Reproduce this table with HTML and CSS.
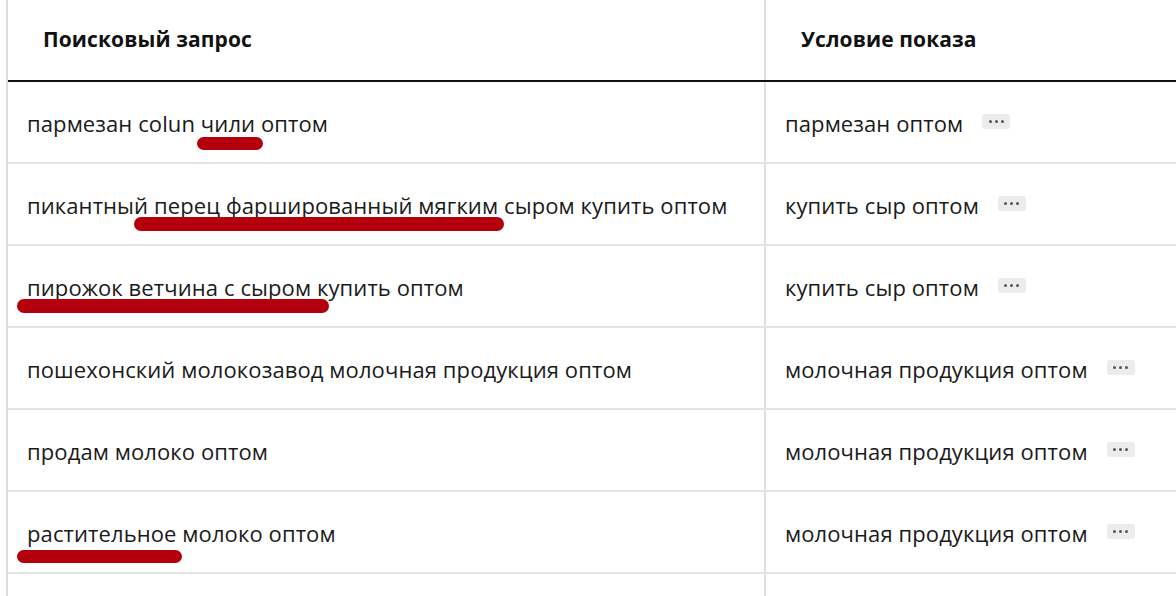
FILE: index.html
```html
<!DOCTYPE html>
<html lang="ru">
<head>
<meta charset="utf-8">
<title>Поисковые запросы</title>
<link rel="stylesheet" href="styles.css">
</head>
<body>
<div class="table">
  <div class="row head">
    <div class="cell query">Поисковый запрос</div>
    <div class="cell cond">Условие показа</div>
  </div>
  <div class="row">
    <div class="cell query">пармезан colun чили оптом<span class="mark mark-1"></span></div>
    <div class="cell cond">пармезан оптом <span class="more"><i></i><i></i><i></i></span></div>
  </div>
  <div class="row">
    <div class="cell query">пикантный перец фаршированный мягким сыром купить оптом<span class="mark mark-2"></span></div>
    <div class="cell cond">купить сыр оптом <span class="more"><i></i><i></i><i></i></span></div>
  </div>
  <div class="row">
    <div class="cell query">пирожок ветчина с сыром купить оптом<span class="mark mark-3"></span></div>
    <div class="cell cond">купить сыр оптом <span class="more"><i></i><i></i><i></i></span></div>
  </div>
  <div class="row">
    <div class="cell query">пошехонский молокозавод молочная продукция оптом</div>
    <div class="cell cond">молочная продукция оптом <span class="more"><i></i><i></i><i></i></span></div>
  </div>
  <div class="row">
    <div class="cell query">продам молоко оптом</div>
    <div class="cell cond">молочная продукция оптом <span class="more"><i></i><i></i><i></i></span></div>
  </div>
  <div class="row">
    <div class="cell query">растительное молоко оптом<span class="mark mark-6"></span></div>
    <div class="cell cond">молочная продукция оптом <span class="more"><i></i><i></i><i></i></span></div>
  </div>
  <div class="row">
    <div class="cell query"></div>
    <div class="cell cond"></div>
  </div>
</div>
</body>
</html>
```

FILE: styles.css
```css
html, body {
  margin: 0;
  padding: 0;
  background: #ffffff;
  overflow: hidden;
}

body {
  font-family: "Open Sans", "Noto Sans", sans-serif;
  color: #1a1a1a;
}

.table {
  margin-left: 6px;
  border-left: 2px solid #dcdcdc;
  display: flex;
  flex-direction: column;
}

.row {
  display: grid;
  grid-template-columns: 756px 1fr;
  height: 82px;
  box-sizing: border-box;
  border-bottom: 2px solid #e4e4e4;
}

.row.head {
  border-bottom: 2px solid #111111;
}

.cell {
  position: relative;
  display: flex;
  align-items: center;
  padding: 1px 0 0 19px;
  font-size: 22px;
  letter-spacing: 0.1px;
  white-space: nowrap;
}

.cond {
  border-left: 2px solid #e0e0e0;
}

.head .cell {
  padding: 0 0 2px 35px;
  font-weight: 700;
  font-size: 21px;
  letter-spacing: 0.1px;
  color: #111111;
}

.more {
  display: inline-flex;
  align-items: center;
  justify-content: center;
  gap: 3px;
  width: 28px;
  height: 15px;
  margin-left: 19px;
  margin-top: -2px;
  border-radius: 3px;
  background: #ececec;
}

.more i {
  display: block;
  width: 3px;
  height: 3px;
  border-radius: 50%;
  background: #555555;
}

.mark {
  position: absolute;
  height: 13px;
  border-radius: 7px;
  background: #b3000c;
}

.mark-1 { left: 189px; top: 55px; width: 66px; }
.mark-2 { left: 126px; top: 53px; width: 370px; height: 14px; }
.mark-3 { left: 9px; top: 53px; width: 312px; height: 14px; }
.mark-6 { left: 9px; top: 58px; width: 165px; }
```
